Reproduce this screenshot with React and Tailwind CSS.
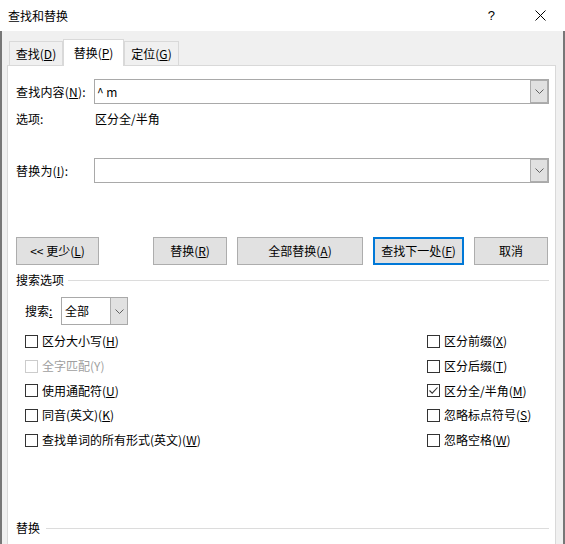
import React from "react";

function Chevron() {
  return (
    <svg width="9" height="5" viewBox="0 0 9 5" fill="none">
      <path d="M0.5 0.5 L4.5 4.5 L8.5 0.5" stroke="#606060" strokeWidth="1" />
    </svg>
  );
}

function Combo({ value, className }) {
  return (
    <div className={"flex h-[25px] items-stretch border border-[#a9a9a9] bg-white " + className}>
      <div className="flex-1 flex items-center pl-[2px] text-black">{value}</div>
      <div className="w-[18px] flex items-center justify-center bg-[#e1e1e1] border border-[#adadad]">
        <Chevron />
      </div>
    </div>
  );
}

function Btn({ children, className = "", def = false }) {
  return (
    <div
      className={
        "h-[28px] flex items-center justify-center bg-[#e1e1e1] " +
        (def ? "border-2 border-[#0078d7] " : "border border-[#adadad] ") +
        className
      }
    >
      {children}
    </div>
  );
}

function Check({ label, checked = false, disabled = false }) {
  return (
    <div className="h-[24.7px] flex items-center">
      <div
        className={
          "w-[13px] h-[13px] border flex items-center justify-center bg-white " +
          (disabled ? "border-[#cccccc]" : "border-[#333333]")
        }
      >
        {checked && (
          <svg width="11" height="11" viewBox="0 0 11 11" fill="none">
            <path d="M1.5 5.5 L4.2 8.2 L9.5 2.5" stroke="#333333" strokeWidth="1.1" />
          </svg>
        )}
      </div>
      <span className={"ml-[4px] " + (disabled ? "text-[#a0a0a0]" : "text-black")}>{label}</span>
    </div>
  );
}

export default function App() {
  return (
    <div className="w-[565px] h-[544px] overflow-hidden flex flex-col bg-[#f0f0f0] text-[12px] leading-[16px] text-black font-['Noto_Sans_CJK_SC','Microsoft_YaHei',sans-serif]">
      {/* title bar */}
      <div className="h-[31px] shrink-0 bg-white flex items-center pl-[8px]">
        <span>查找和替换</span>
        <span className="ml-auto mr-[40px] text-[13px] font-['Liberation_Sans',sans-serif]">?</span>
        <svg className="mr-[19px]" width="11" height="11" viewBox="0 0 11 11" fill="none">
          <path d="M0.5 0.5 L10.5 10.5 M10.5 0.5 L0.5 10.5" stroke="#000" strokeWidth="1" />
        </svg>
      </div>

      {/* body */}
      <div className="flex-1 flex flex-col border-l-2 border-r-2 border-[#777777] pl-[5px] pr-[7px]">
        {/* tabs */}
        <div className="flex items-end h-[35px] pl-[2px] relative z-10">
          <div className="w-[54px] h-[24px] mb-[1px] flex items-center justify-center border border-b-0 border-[#d9d9d9] bg-[#f0f0f0]">
            查找(<u>D</u>)
          </div>
          <div className="w-[61px] h-[27px] flex items-center justify-center border border-b-0 border-[#d9d9d9] bg-white pb-[1px]">
            替换(<u>P</u>)
          </div>
          <div className="w-[55px] h-[24px] mb-[1px] flex items-center justify-center border border-b-0 border-[#d9d9d9] bg-[#f0f0f0]">
            定位(<u>G</u>)
          </div>
        </div>

        {/* panel */}
        <div className="flex-1 -mt-[1px] border border-b-0 border-[#d9d9d9] bg-white pl-[8px] pr-[6px] pt-[13px]">
          <div className="flex items-center">
            <span className="w-[78px] tracking-[0.2px]">查找内容(<u>N</u>):</span>
            <Combo value="^ m" className="flex-1" />
          </div>
          <div className="flex items-center h-[16px] mt-[7px]">
            <span className="w-[79px]">选项:</span>
            <span>区分全/半角</span>
          </div>
          <div className="flex items-center mt-[31px]">
            <span className="w-[78px] tracking-[0.2px]">替换为(<u>I</u>):</span>
            <Combo value="" className="flex-1" />
          </div>

          <div className="flex mt-[54px]">
            <Btn className="w-[83px]">&lt;&lt; 更少(<u>L</u>)</Btn>
            <Btn className="w-[74px] ml-[54px]">替换(<u>R</u>)</Btn>
            <Btn className="w-[126px] ml-[10px]">全部替换(<u>A</u>)</Btn>
            <Btn className="w-[91px] ml-[10px]" def>查找下一处(<u>F</u>)</Btn>
            <Btn className="w-[74px] ml-[10px]">取消</Btn>
          </div>

          <div className="flex items-center mt-[7px] h-[16px]">
            <span>搜索选项</span>
            <div className="flex-1 h-[1px] bg-[#dcdcdc] ml-[4px]" />
          </div>

          <div className="flex items-center mt-[9px] pl-[9px]">
            <span className="w-[36px]">搜索<u>:</u></span>
            <div className="w-[67px] h-[28px] flex items-stretch border border-[#a9a9a9] bg-white">
              <div className="flex-1 flex items-center pl-[3px]">全部</div>
              <div className="w-[17px] flex items-center justify-center bg-[#e1e1e1] border-l border-[#adadad]">
                <Chevron />
              </div>
            </div>
          </div>

          <div className="flex mt-[4px] pl-[9px]">
            <div className="w-[402px] flex flex-col">
              <Check label={<>区分大小写(<u>H</u>)</>} />
              <Check label="全字匹配(Y)" disabled />
              <Check label={<>使用通配符(<u>U</u>)</>} />
              <Check label={<>同音(英文)(<u>K</u>)</>} />
              <Check label={<>查找单词的所有形式(英文)(<u>W</u>)</>} />
            </div>
            <div className="flex flex-col">
              <Check label={<>区分前缀(<u>X</u>)</>} />
              <Check label={<>区分后缀(<u>T</u>)</>} />
              <Check label={<>区分全/半角(<u>M</u>)</>} checked />
              <Check label={<>忽略标点符号(<u>S</u>)</>} />
              <Check label={<>忽略空格(<u>W</u>)</>} />
            </div>
          </div>

          <div className="flex items-center mt-[68px] h-[16px]">
            <span>替换</span>
            <div className="flex-1 h-[1px] bg-[#dcdcdc] ml-[6px]" />
          </div>
        </div>
      </div>
    </div>
  );
}
